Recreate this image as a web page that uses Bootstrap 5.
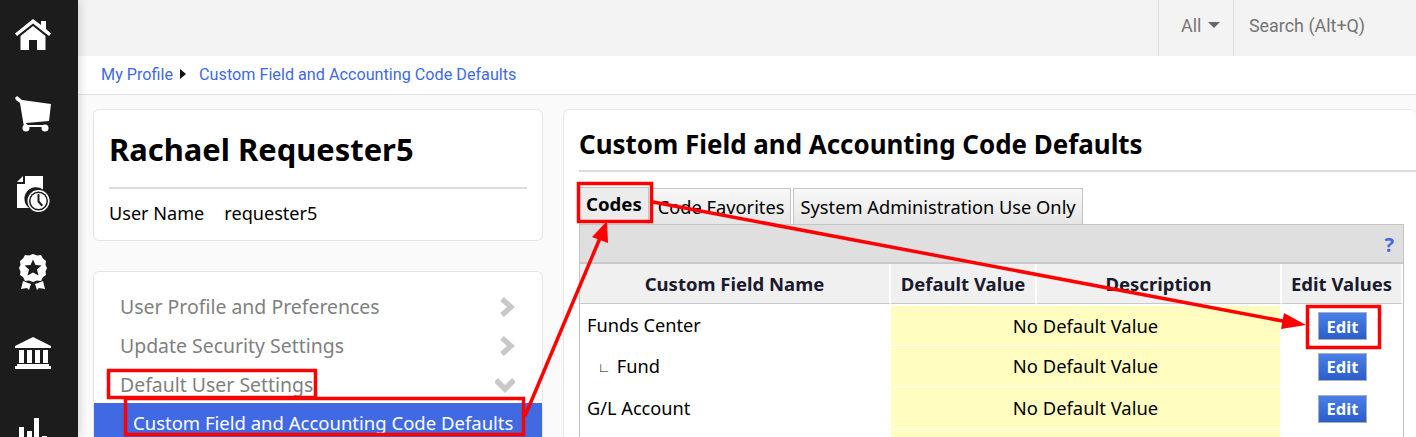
<!DOCTYPE html>
<html lang="en">
<head>
<meta charset="utf-8">
<title>Custom Field and Accounting Code Defaults</title>
<link href="https://cdn.jsdelivr.net/npm/bootstrap@5.3.0/dist/css/bootstrap.min.css" rel="stylesheet">
<style>
html,body{height:437px;overflow:hidden}
body{background:#fafafa;font-family:"Noto Sans","Open Sans",sans-serif;color:#000;position:relative}
.shell{height:437px;overflow:hidden}
.rail{width:78px;flex:none;background:#1c1c1c;box-shadow:3px 0 8px rgba(0,0,0,.12);height:437px;overflow:hidden;margin:0;padding:0 12px 0 0;z-index:2}
.railcell{height:79.5px;flex:none;fill:#fff}
.railcell:first-child{margin-top:-5px}
.railcell svg{display:block}
.topstrip{height:56px;flex:none;background:#f3f3f3;color:#757575;font:17.9px Roboto,sans-serif}
.scope-cell{width:76px;height:56px;border-left:1px solid #dedede;border-right:1px solid #dedede;padding:0 0 6px 22px}
.caret-down{display:inline-block;width:0;height:0;border-left:6px solid transparent;border-right:6px solid transparent;border-top:6px solid #666;margin-left:7px}
.search-cell{padding:0 0 6px 15px;width:182px}
.crumbs{height:39px;flex:none;background:#fff;border-bottom:1px solid #e4e4e4;padding:0 0 2px 23px;font:16.2px Roboto,sans-serif;color:#4169e1}
.crumbs a{color:#4169e1;text-decoration:none}
.caret-right{display:inline-block;width:0;height:0;border-top:5px solid transparent;border-bottom:5px solid transparent;border-left:6px solid #111;margin:0 13px 0 7px}
.work{padding:14px 0 0 15px;gap:20px}
.leftcol{width:450px;flex:none}
.panel{background:#fff;border:1px solid #e6e6e6;border-radius:6px}
.idcard{height:132px;padding:0 15px;margin-bottom:30px}
.idname{font-size:30.9px;font-weight:700;line-height:42px;margin:18px 0 17px;padding:0}
.idrule{height:2px;background:#dcdcdc;margin-bottom:12px}
.idline{font-size:18.1px;line-height:24px}
.idline span{margin-left:20px}
.menucard{height:300px;padding-top:15px;border-bottom:0}
.menuitem{height:39px;padding:0 27px 0 26px;font-size:19.45px;color:#808080}
.menuitem svg{fill:none;stroke:#c8c8c8;stroke-width:5.5}
.menusel{height:40px;background:#4169e1;color:#fff;padding-left:39px;font-size:18.5px;margin-top:-1px}
.contentcard{flex:1;height:340px;border-right:0;padding:0 0 0 15px;min-width:0}
.pagehead{height:48px;margin:14px 0 0;font-size:25.93px;font-weight:700;line-height:41px;border-bottom:2px solid #dcdcdc;margin-right:-1px;white-space:nowrap}
.tabsrow{margin-top:15px;gap:2px;padding-left:0;height:37px;list-style:none;margin-bottom:0}
.tabitem{height:36px;margin-top:1px;border:1px solid #c4c4c4;border-bottom:0;padding:0 6px;background:linear-gradient(#f8f8f8,#e6e6e6);font-size:18.25px;line-height:36px;white-space:nowrap}
.tabitem.on{background:#ececec;font-weight:700;height:37px;margin-top:0;line-height:32px;font-size:18.6px}
.gridwrap{width:825px;border:1px solid #c4c4c4;background:#fff;border-bottom:0}
.greybar{height:39px;background:#dfdfdf;border-bottom:2px solid #c9c9c9;color:#4169e1;font-weight:700;font-size:20px;padding:8px 9px 0 0;text-align:right;line-height:24px}
.fieldtable{width:823px;table-layout:fixed;border-collapse:separate;border-spacing:0;font-size:18.2px}
.fieldtable th{background:#f0f0f0;height:40px;text-align:center;color:#1a1a2e;font-size:18.5px;font-weight:700;border-bottom:1px solid #c9c9c9;border-right:2px solid #fff;white-space:nowrap;padding:0 0 0 0}
.fieldtable td{height:41.5px;padding:1px 0 0 7px;border-bottom:1px solid #fff;white-space:nowrap}
.fieldtable tbody tr:first-child td{border-top:2px solid #fff;height:42px}
.fieldtable tbody tr:nth-child(3) td{height:42.5px}
.fieldtable td.yellow{background:#fffec0;text-align:center;padding:0;border-right:2px solid #fff;font-size:18.4px}
.fieldtable td.act{text-align:center;padding:0}
.indent{padding-left:11px;font-size:13px;font-weight:600;vertical-align:1px;margin-right:6px}
.btnedit{width:49px;height:28px;padding:0;border:1px solid #a8aebd;border-radius:0;background:linear-gradient(#4a7fe8,#2b5ec8);color:#fff;font-weight:700;font-size:16.5px;line-height:25px}
.markup{position:absolute;left:0;top:0;z-index:5;pointer-events:none}
</style>
</head>
<body>
<div class="shell d-flex">
  <nav class="rail d-flex flex-column align-items-center">
    <div class="railcell d-flex align-items-center"><svg width="36" height="31" viewBox="0 0 36 31" aria-hidden="true"><path d="M18 0 L26 6 V2 H31 V10 L36 14.500 L34 17 L18 4.500 L2 17 L0 14.500 Z"/><path d="M18 7 L30.500 17 V31 H22 V21 H14 V31 H5.500 V17 Z"/></svg></div>
    <div class="railcell d-flex align-items-center"><svg width="36" height="36" viewBox="0 0 36 36" aria-hidden="true"><path d="M0 2 L2 0 L7 4 L36 8 L34 25 L11 27 L12 29 H31 V31 H9 L5 7 L1 4 Z"/><circle cx="11" cy="32" r="3.500"/><circle cx="30" cy="32" r="3.500"/></svg></div>
    <div class="railcell d-flex align-items-center"><svg width="34" height="36" viewBox="0 0 34 36" aria-hidden="true"><path d="M1 6 L7 0 V6 Z"/><path d="M9 0 H27 V13.500 A11.500 11.500 0 0 0 13 32 H1 V8 H9 Z"/><circle cx="22.500" cy="25" r="11" fill="#fff"/><circle cx="22.500" cy="25" r="9.500" fill="#1c1c1c"/><circle cx="22.500" cy="25" r="8" fill="#fff"/><path d="M21.500 18 H23.500 V25 L27 29 L25.500 30.500 L21.500 26 Z" fill="#1c1c1c"/></svg></div>
    <div class="railcell d-flex align-items-center"><svg width="28" height="38" viewBox="0 0 28 38" aria-hidden="true"><path d="M14 0 L18 1.500 L22 1 L24 4.500 L27 7 L26.500 11 L28 14 L26.500 17.500 L27 21 L24 23 L22 27 L18 26.500 L14 28 L10 26.500 L6 27 L4 23 L1 21 L1.500 17.500 L0 14 L1.500 11 L1 7 L4 4.500 L6 1 L10 1.500 Z"/><path d="M14 5.500 L16.500 11 L22.500 11.500 L18 15.500 L19.500 21.500 L14 18.500 L8.500 21.500 L10 15.500 L5.500 11.500 L11.500 11 Z" fill="#1c1c1c"/><path d="M4 27 L9 29 L12 30 L10 36 L8 34 L2 35 Z M24 27 L19 29 L16 30 L18 36 L20 34 L26 35 Z"/></svg></div>
    <div class="railcell d-flex align-items-center"><svg width="36" height="32" viewBox="0 0 36 32" aria-hidden="true"><path d="M18 0 L36 9 V11 H0 V9 Z"/><path d="M4 13 H9 V26 H4 Z M12 13 H17 V26 H12 Z M20 13 H25 V26 H20 Z M28 13 H33 V26 H28 Z"/><path d="M2 27 H34 V29 H36 V32 H0 V29 H2 Z"/></svg></div>
    <div class="railcell d-flex align-items-center"><svg width="28" height="28" viewBox="0 0 28 28" aria-hidden="true"><path d="M0 9 H5 V28 H0 Z M8 13 H13 V28 H8 Z M15 0 H20 V28 H15 Z M23 18 H28 V28 H23 Z"/></svg></div>
  </nav>
  <div class="flex-grow-1 d-flex flex-column" style="min-width:0">
    <div class="topstrip d-flex justify-content-end">
      <div class="scope-cell d-flex align-items-center">All<span class="caret-down"></span></div>
      <div class="search-cell d-flex align-items-center">Search (Alt+Q)</div>
    </div>
    <div class="crumbs d-flex align-items-center"><a href="#">My Profile</a><span class="caret-right"></span><a href="#">Custom Field and Accounting Code Defaults</a></div>
    <div class="work d-flex">
      <div class="leftcol">
        <section class="panel idcard">
          <h1 class="idname">Rachael Requester5</h1>
          <div class="idrule"></div>
          <div class="idline">User Name<span>requester5</span></div>
        </section>
        <section class="panel menucard">
          <div class="menuitem d-flex align-items-center justify-content-between">User Profile and Preferences<svg width="16" height="20" viewBox="0 0 16 20" aria-hidden="true"><path d="M3 2 L12 10 L3 18"/></svg></div>
          <div class="menuitem d-flex align-items-center justify-content-between">Update Security Settings<svg width="16" height="20" viewBox="0 0 16 20" aria-hidden="true"><path d="M3 2 L12 10 L3 18"/></svg></div>
          <div class="menuitem d-flex align-items-center justify-content-between">Default User Settings<svg width="20" height="16" viewBox="0 0 20 16" aria-hidden="true"><path d="M1 3 L10 12 L19 3"/></svg></div>
          <div class="menuitem menusel d-flex align-items-center">Custom Field and Accounting Code Defaults</div>
        </section>
      </div>
      <main class="panel contentcard">
        <h2 class="pagehead">Custom Field and Accounting Code Defaults</h2>
        <ul class="tabsrow d-flex">
          <li class="tabitem on">Codes</li>
          <li class="tabitem">Code Favorites</li>
          <li class="tabitem">System Administration Use Only</li>
        </ul>
        <div class="gridwrap">
          <div class="greybar">?</div>
          <table class="fieldtable">
            <colgroup><col style="width:311px"><col style="width:146px"><col style="width:245px"><col style="width:121px"></colgroup>
            <thead><tr><th>Custom Field Name</th><th>Default Value</th><th>Description</th><th>Edit Values</th></tr></thead>
            <tbody>
              <tr><td>Funds Center</td><td class="yellow" colspan="2">No Default Value</td><td class="act"><button class="btn btnedit" type="button">Edit</button></td></tr>
              <tr><td><span class="indent">∟</span>Fund</td><td class="yellow" colspan="2">No Default Value</td><td class="act"><button class="btn btnedit" type="button">Edit</button></td></tr>
              <tr><td>G/L Account</td><td class="yellow" colspan="2">No Default Value</td><td class="act"><button class="btn btnedit" type="button">Edit</button></td></tr>
              <tr><td></td><td class="yellow" colspan="2"></td><td class="act"></td></tr>
            </tbody>
          </table>
        </div>
      </main>
    </div>
  </div>
</div>
<svg class="markup" width="1416" height="437" viewBox="0 0 1416 437" aria-hidden="true">
  <g fill="none" stroke="#ff0000" stroke-width="3.500">
    <rect x="578.500" y="183.500" width="73" height="38"/>
    <rect x="1307.500" y="306.500" width="72" height="41"/>
    <rect x="108.500" y="370.500" width="207" height="27"/>
    <rect x="125.500" y="398.500" width="398" height="36"/>
    <path d="M525 416 L600 238"/>
    <path d="M653 202 L1288 322"/>
  </g>
  <path d="M607 221 L608 243 L592 237 Z M1306 325 L1281 329 L1284 313 Z" fill="#ff0000"/>
</svg>
<script src="https://cdn.jsdelivr.net/npm/bootstrap@5.3.0/dist/js/bootstrap.bundle.min.js"></script>
</body>
</html>
